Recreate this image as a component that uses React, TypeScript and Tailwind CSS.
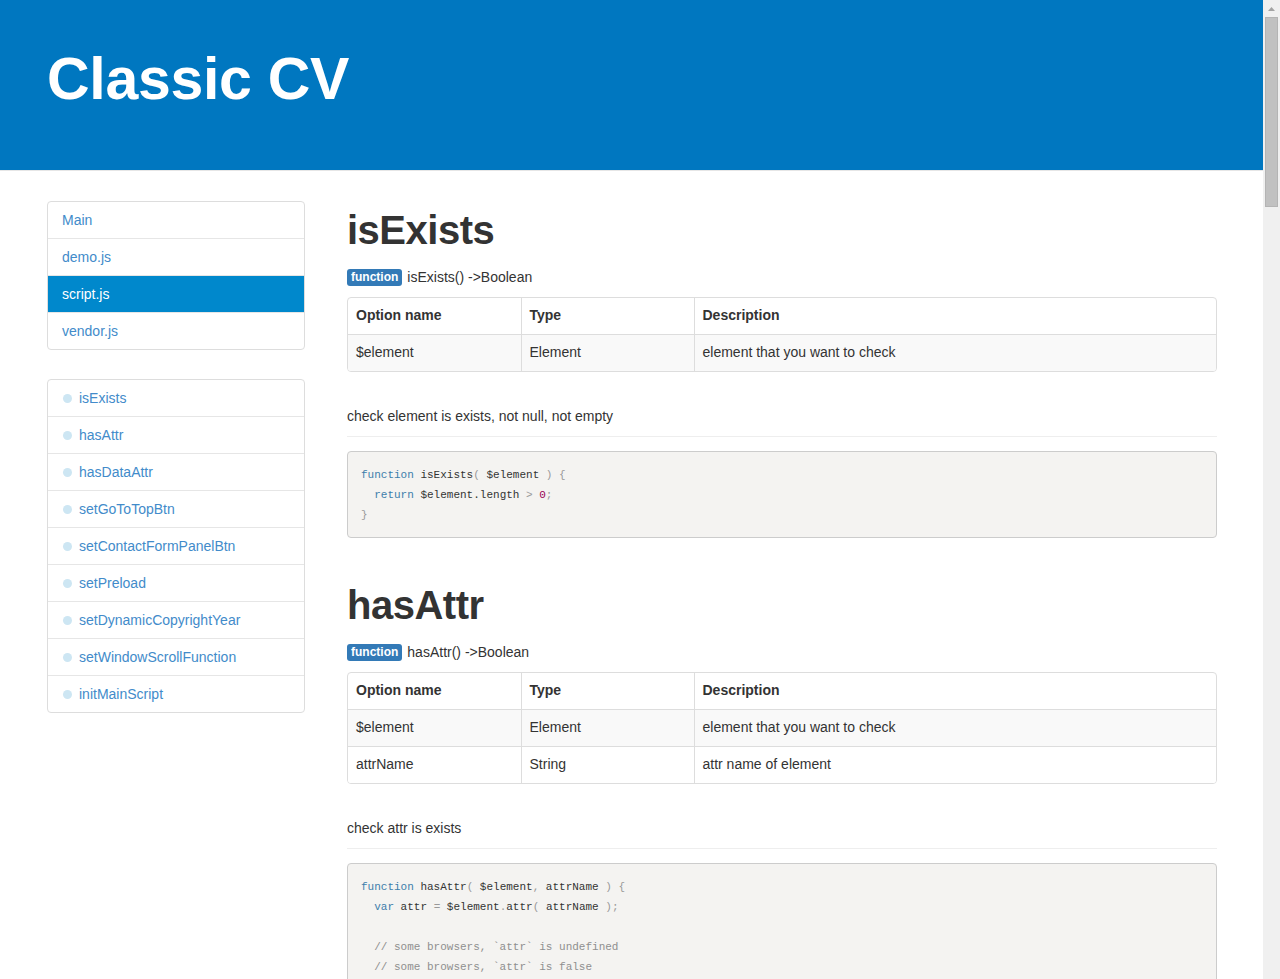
import React from "react";

type Row = { name: string; type: string; desc: string };

type Tok = { t: string; c?: "k" | "p" | "n" | "c" };

const navFiles = ["Main", "demo.js", "script.js", "vendor.js"];
const navFns = [
  "isExists",
  "hasAttr",
  "hasDataAttr",
  "setGoToTopBtn",
  "setContactFormPanelBtn",
  "setPreload",
  "setDynamicCopyrightYear",
  "setWindowScrollFunction",
  "initMainScript",
];

const tokColor = (c?: Tok["c"]) => {
  if (c === "k") return "text-[#3d7eab]";
  if (c === "p") return "text-[#999999]";
  if (c === "n") return "text-[#990055]";
  if (c === "c") return "text-[#8f8f8f]";
  return "text-[#333333]";
};

const Code = ({ lines }: { lines: Tok[][] }) => (
  <pre className="border border-[#cccccc] rounded-[4px] bg-[#f4f3f1] pt-[13px] pb-[12px] px-[13px] font-['Liberation_Mono',monospace] text-[11px] leading-[20px] overflow-hidden">
    {lines.map((line, i) => (
      <div key={i} className="h-[20px] whitespace-pre">
        {line.map((tok, j) => (
          <span key={j} className={tokColor(tok.c)}>
            {tok.t}
          </span>
        ))}
      </div>
    ))}
  </pre>
);

const Table = ({ rows }: { rows: Row[] }) => (
  <div className="border border-[#dddddd] rounded-[4px] overflow-hidden mt-[10px]">
    <table className="w-full border-collapse text-[14px] text-[#333333]">
      <thead>
        <tr className="h-[36px]">
          <th className="w-[173px] text-left font-bold px-[8px] border-r border-[#dddddd]">Option name</th>
          <th className="w-[173px] text-left font-bold px-[8px] border-r border-[#dddddd]">Type</th>
          <th className="text-left font-bold px-[8px]">Description</th>
        </tr>
      </thead>
      <tbody>
        {rows.map((r, i) => (
          <tr key={i} className={`h-[37px] border-t border-[#dddddd] ${i % 2 === 0 ? "bg-[#f9f9f9]" : "bg-white"}`}>
            <td className="px-[8px] border-r border-[#dddddd]">{r.name}</td>
            <td className="px-[8px] border-r border-[#dddddd]">{r.type}</td>
            <td className="px-[8px]">{r.desc}</td>
          </tr>
        ))}
      </tbody>
    </table>
  </div>
);

const Section = ({
  title,
  sig,
  rows,
  note,
  code,
}: {
  title: string;
  sig: string;
  rows: Row[];
  note: string;
  code: Tok[][];
}) => (
  <section>
    <h1 className="text-[40px] leading-[46px] font-bold tracking-[-0.5px] text-[#333333]">{title}</h1>
    <div className="mt-[14px] flex items-center h-[20px] text-[14px] text-[#333333]">
      <span className="bg-[#337ab7] text-white text-[12px] font-bold leading-[17px] h-[17px] px-[4px] rounded-[3px] mr-[5px]">
        function
      </span>
      {sig}
    </div>
    <Table rows={rows} />
    <p className="mt-[34px] text-[14px] leading-[20px] text-[#333333]">{note}</p>
    <div className="mt-[10px] border-t border-[#eeeeee]" />
    <div className="mt-[14px]">
      <Code lines={code} />
    </div>
  </section>
);

export default function App() {
  return (
    <div className="flex h-[979px] overflow-hidden bg-white font-['Liberation_Sans',Arial,sans-serif]">
      <div className="flex-1 overflow-hidden">
        <header className="h-[170px] bg-[#0077c0] flex items-center pl-[47px] border-b border-[#e6e6e6] box-content">
          <h1 className="text-[59px] font-bold text-white leading-none tracking-[-0.3px] -mt-[12px]">Classic CV</h1>
        </header>
        <div className="flex pl-[47px] gap-[42px] pt-[30px]">
          <aside className="w-[258px] shrink-0 flex flex-col gap-[29px]">
            <ul className="border border-[#dddddd] rounded-[4px] overflow-hidden text-[14px]">
              {navFiles.map((f, i) => (
                <li
                  key={f}
                  className={`px-[14px] py-[10px] leading-[16px] ${i > 0 ? "border-t border-[#e6e6e6]" : ""} ${
                    f === "script.js" ? "bg-[#0088cc] text-white" : "text-[#428bca]"
                  }`}
                >
                  {f}
                </li>
              ))}
            </ul>
            <ul className="border border-[#dddddd] rounded-[4px] overflow-hidden text-[14px]">
              {navFns.map((f, i) => (
                <li
                  key={f}
                  className={`flex items-center px-[14px] py-[10px] leading-[16px] text-[#428bca] ${
                    i > 0 ? "border-t border-[#e6e6e6]" : ""
                  }`}
                >
                  <span className="w-[9px] h-[9px] rounded-full bg-[#cde6f3] ml-[1px] mr-[7px]" />
                  {f}
                </li>
              ))}
            </ul>
          </aside>
          <main className="w-[870px] shrink-0 pt-[6px] flex flex-col gap-[44px]">
            <Section
              title="isExists"
              sig="isExists() ->Boolean"
              rows={[{ name: "$element", type: "Element", desc: "element that you want to check" }]}
              note="check element is exists, not null, not empty"
              code={[
                [{ t: "function", c: "k" }, { t: " isExists" }, { t: "( ", c: "p" }, { t: "$element" }, { t: " ) {", c: "p" }],
                [{ t: "  return", c: "k" }, { t: " $element.length " }, { t: ">", c: "p" }, { t: " " }, { t: "0", c: "n" }, { t: ";", c: "p" }],
                [{ t: "}", c: "p" }],
              ]}
            />
            <Section
              title="hasAttr"
              sig="hasAttr() ->Boolean"
              rows={[
                { name: "$element", type: "Element", desc: "element that you want to check" },
                { name: "attrName", type: "String", desc: "attr name of element" },
              ]}
              note="check attr is exists"
              code={[
                [
                  { t: "function", c: "k" },
                  { t: " hasAttr" },
                  { t: "( ", c: "p" },
                  { t: "$element" },
                  { t: ", ", c: "p" },
                  { t: "attrName" },
                  { t: " ) {", c: "p" },
                ],
                [
                  { t: "  var", c: "k" },
                  { t: " attr " },
                  { t: "=", c: "p" },
                  { t: " $element" },
                  { t: ".", c: "p" },
                  { t: "attr" },
                  { t: "( ", c: "p" },
                  { t: "attrName" },
                  { t: " );", c: "p" },
                ],
                [{ t: "" }],
                [{ t: "  // some browsers, `attr` is undefined", c: "c" }],
                [{ t: "  // some browsers, `attr` is false", c: "c" }],
                [{ t: "  return", c: "k" }, { t: " typeof attr " }, { t: "!==", c: "p" }, { t: " undefined" }],
              ]}
            />
          </main>
        </div>
      </div>
      <div className="w-[17px] shrink-0 bg-[#f0f0f0] flex flex-col items-center">
        <div className="h-[17px] flex items-center justify-center">
          <svg width="7" height="4" viewBox="0 0 7 4">
            <path d="M0 4 L3.5 0 L7 4 Z" fill="#a3a3a3" />
          </svg>
        </div>
        <div className="w-[13px] h-[190px] bg-[#c1c1c1] border border-[#b4b4b4]" />
      </div>
    </div>
  );
}
